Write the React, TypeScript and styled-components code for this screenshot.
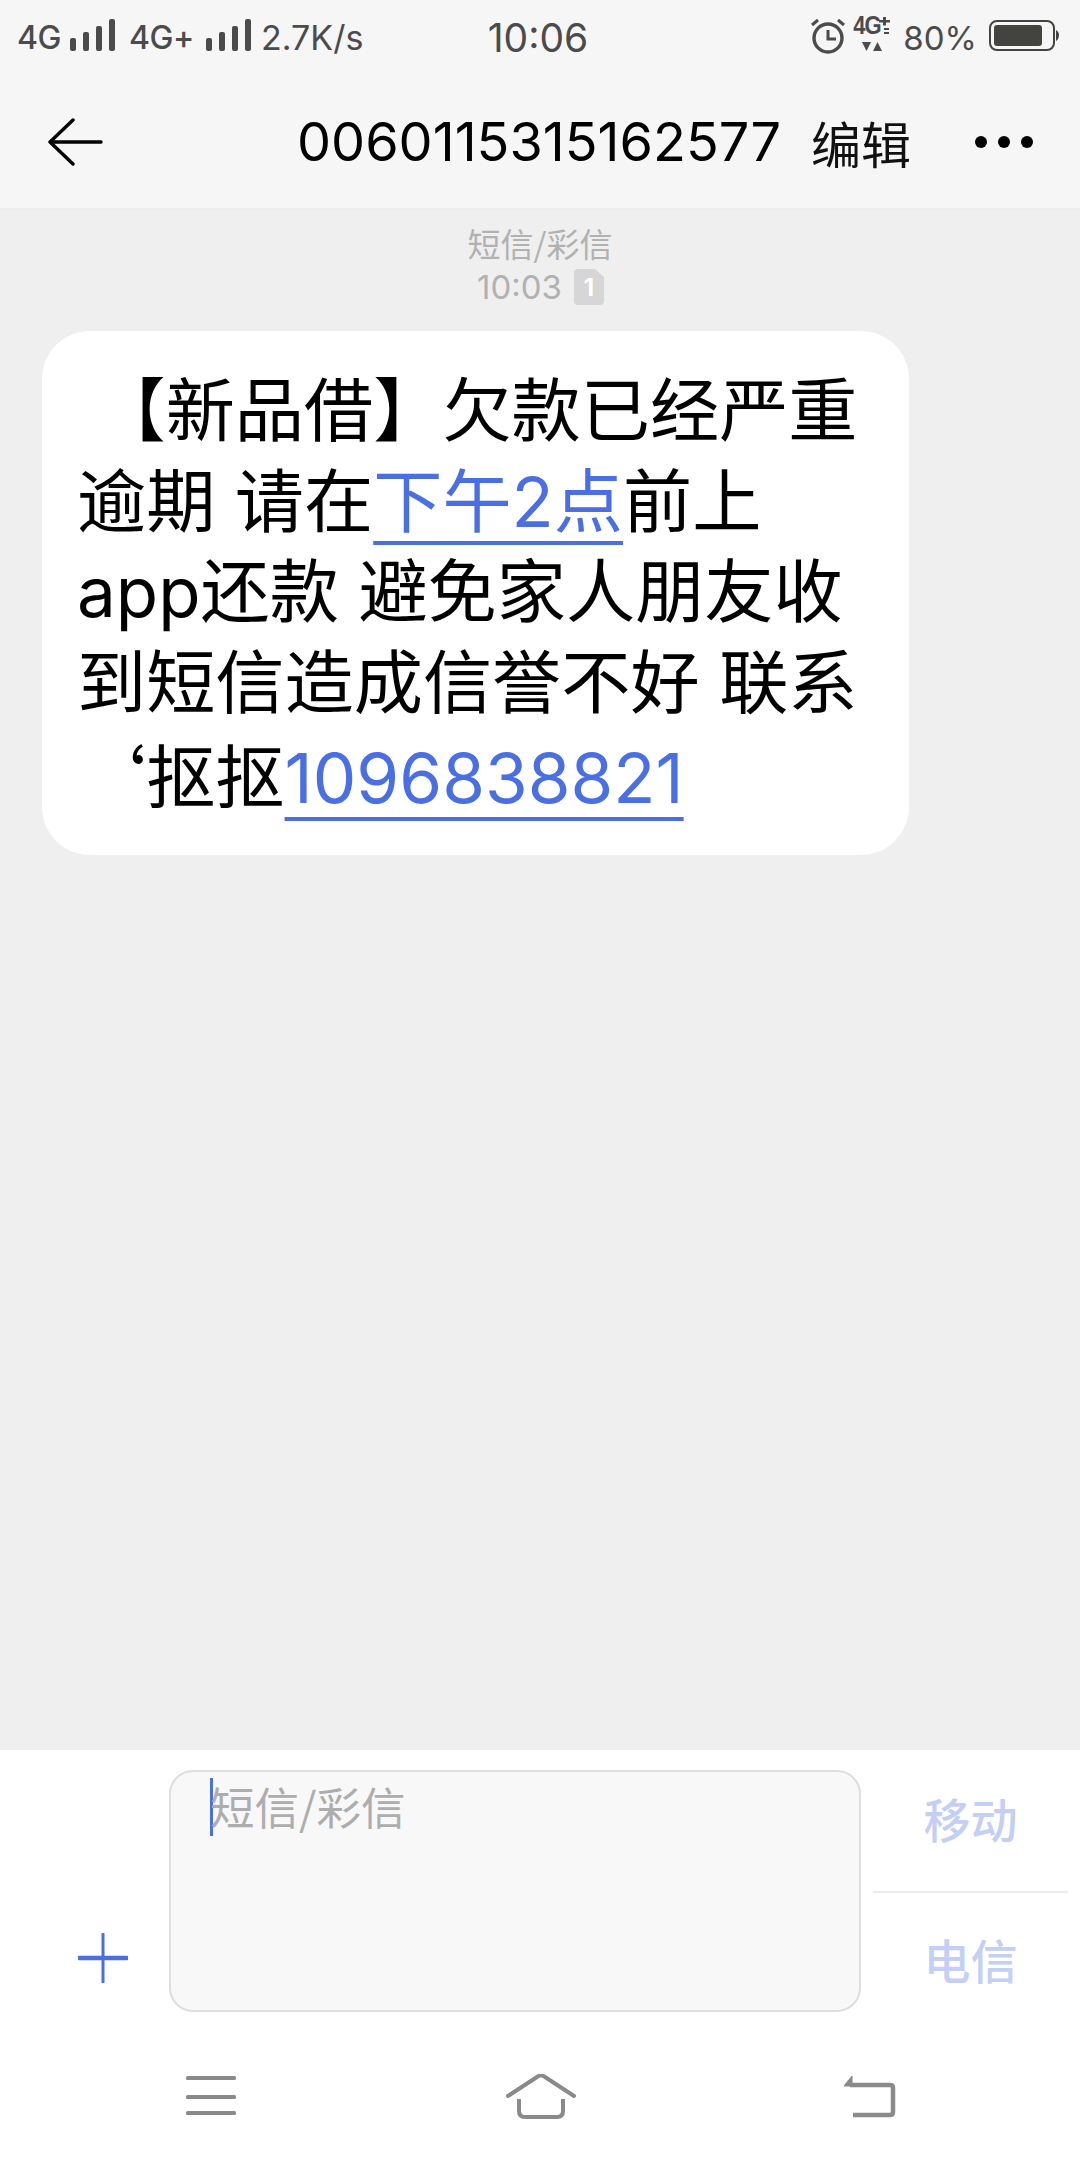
import React from "react";
import styled, { createGlobalStyle } from "styled-components";

const CJK = `"Noto Sans CJK SC", sans-serif`;
const UI = `Inter, "Noto Sans CJK SC", sans-serif`;
const BLUE = "#4a6fe3";

const Global = createGlobalStyle`
  html, body { margin: 0; padding: 0; background: #efefef; }
  * { box-sizing: border-box; }
`;

const Screen = styled.div`
  width: 1080px;
  height: 2160px;
  display: flex;
  flex-direction: column;
  overflow: hidden;
  font-family: ${UI};
`;

const Top = styled.header`
  background: #f6f6f6;
  border-bottom: 2px solid #ededed;
  height: 210px;
  flex: none;
`;

const StatusBar = styled.div`
  height: 72px;
  padding: 0 21px 0 17px;
  display: grid;
  grid-template-columns: 1fr auto 1fr;
  align-items: center;
  color: #4b4b4b;
`;

const StatusLeft = styled.div`
  display: flex;
  align-items: center;
`;

const StatusRight = styled.div`
  display: flex;
  align-items: center;
  justify-content: flex-end;
`;

const NetLabel = styled.span`
  font-size: 32px;
  font-weight: 500;
  line-height: 40px;
  letter-spacing: -0.5px;
  width: ${(p) => p.$w}px;
  margin-left: ${(p) => p.$gap || 0}px;
  white-space: nowrap;
  margin-top: 4px;
`;

const Speed = styled.span`
  font-size: 34px;
  line-height: 40px;
  margin-left: 10px;
  margin-top: 3px;
`;

const Clock = styled.span`
  font-size: 39px;
  line-height: 44px;
  margin-top: 4px;
`;

const Percent = styled.span`
  font-size: 33px;
  line-height: 40px;
  margin: 3px 12px 0 10px;
`;

const Mini = styled.div`
  width: 40px;
  margin-left: 8px;
  height: 36px;
  position: relative;
  margin-top: -4px;
`;

const MiniText = styled.span`
  font-family: "Liberation Sans", sans-serif;
  font-weight: 700;
  font-size: 22px;
  line-height: 20px;
  position: absolute;
  left: 0;
  top: 0;
  letter-spacing: -1px;
  color: #4b4b4b;
  transform: scaleY(1.2);
`;

const Nav = styled.nav`
  height: 136px;
  padding: 4px 47px 0 47px;
  display: flex;
  align-items: center;
`;

const Title = styled.h1`
  margin: 0 0 0 194px;
  font-size: 54px;
  font-weight: 400;
  color: #000;
  white-space: nowrap;
  line-height: 64px;
`;

const Edit = styled.span`
  margin-left: 30px;
  font-family: ${CJK};
  font-size: 50px;
  color: #111;
  line-height: 64px;
`;

const Dots = styled.span`
  margin-left: auto;
  display: flex;
  gap: 11px;
`;

const Dot = styled.i`
  width: 12px;
  height: 12px;
  border-radius: 50%;
  background: #000;
`;

const Feed = styled.main`
  flex: 1;
  background: #efefef;
  padding: 12px 42px 0;
`;

const Channel = styled.div`
  text-align: center;
  font-family: ${CJK};
  font-size: 33px;
  line-height: 42px;
  color: #b1b1b1;
`;

const Stamp = styled.div`
  display: flex;
  justify-content: center;
  align-items: center;
  gap: 12px;
  height: 38px;
  margin-top: 4px;
  margin-left: 1px;
  font-size: 33px;
  color: #b1b1b1;
`;

const SimBadge = styled.span`
  width: 30px;
  height: 36px;
  background: #d6d6d6;
  color: #fff;
  font-size: 24px;
  font-weight: 700;
  display: flex;
  align-items: center;
  justify-content: center;
  border-radius: 4px;
  clip-path: polygon(0 0, 70% 0, 100% 22%, 100% 100%, 0 100%);
`;

const Bubble = styled.article`
  margin-top: 25px;
  width: 867px;
  height: 524px;
  background: #fff;
  border-radius: 48px;
  padding: 35px 0 0 35px;
  color: #000;
  font-size: 69.2px;
`;

const Line = styled.div`
  height: 90.5px;
  line-height: 90.5px;
  white-space: pre;
`;

const Quote = styled.span`
  font-family: ${CJK};
`;

const Link = styled.span`
  color: ${BLUE};
  text-decoration: underline;
  text-decoration-thickness: 4px;
  text-underline-offset: 14px;
`;

const Composer = styled.section`
  flex: none;
  height: 290px;
  background: #fff;
  padding: 20px 12px 0 0;
  display: flex;
  align-items: flex-start;
`;

const PlusSlot = styled.div`
  width: 169px;
  height: 242px;
  padding: 163px 0 0 78px;
`;

const Input = styled.div`
  width: 692px;
  height: 242px;
  border: 2px solid #dedede;
  border-radius: 24px;
  background: #f8f8f8;
  padding: 6px 0 0 39px;
  display: flex;
  align-items: flex-start;
`;

const Caret = styled.i`
  width: 3px;
  height: 58px;
  background: ${BLUE};
  flex: none;
  margin-right: -3px;
`;

const Placeholder = styled.span`
  font-family: ${CJK};
  font-size: 44.5px;
  line-height: 56px;
  color: #adadad;
  white-space: nowrap;
`;

const Carriers = styled.div`
  margin-left: 12px;
  width: 195px;
  height: 242px;
  display: flex;
  flex-direction: column;
`;

const Carrier = styled.button`
  flex: none;
  height: 121px;
  border: 0;
  background: none;
  padding: ${(p) => p.$pad};
  font-family: ${CJK};
  font-size: 47px;
  font-weight: 500;
  color: #c3cff5;
  & + & {
    border-top: 2px solid #ececec;
  }
`;

const Keys = styled.footer`
  flex: none;
  height: 120px;
  background: #fff;
  display: flex;
  align-items: flex-start;
  padding: 34px 0 0 186px;
`;

const KeySlot = styled.div`
  margin-left: ${(p) => p.$gap || 0}px;
  line-height: 0;
`;

function Bars() {
  return (
    <svg width="45" height="34" viewBox="0 0 45 34" fill="#4b4b4b">
      <rect x="0" y="19" width="6" height="13" rx="2" />
      <rect x="13" y="13" width="6" height="19" rx="2" />
      <rect x="26" y="7" width="6" height="25" rx="2" />
      <rect x="39" y="0" width="6" height="32" rx="2" />
    </svg>
  );
}

function Alarm() {
  return (
    <svg width="34" height="36" viewBox="0 0 34 36" fill="none" stroke="#4b4b4b">
      <circle cx="17" cy="20" r="14" strokeWidth="3.400" />
      <path d="M17 12v9h8" strokeWidth="3" />
      <path d="M1 7l6-5M33 7l-6-5" strokeWidth="3" />
    </svg>
  );
}

function Battery() {
  return (
    <svg width="70" height="32" viewBox="0 0 70 32">
      <rect x="1" y="1" width="64" height="29" rx="7" fill="none" stroke="#43443f" strokeWidth="2" />
      <rect x="5" y="5" width="48" height="21" rx="3" fill="#43443f" />
      <path d="M67 10c2 1 3 3 3 5s-1 5-3 6z" fill="#43443f" />
    </svg>
  );
}

function MiniNet() {
  return (
    <Mini>
      <MiniText>4G</MiniText>
      <svg width="40" height="36" viewBox="0 0 40 36" fill="#4b4b4b">
        <path d="M30 1h3v3h4v2.500h-4v3h-3v-3h-4V4h4z" />
        <path d="M31 12h5v2h-5zM31 16h5v2h-5z" />
        <path d="M9 26h9l-4.500 9zM20 35l4.500-9 4.500 9z" />
      </svg>
    </Mini>
  );
}

export default function App() {
  return (
    <Screen>
      <Global />
      <Top>
        <StatusBar>
          <StatusLeft>
            <NetLabel $w={53}>4G</NetLabel>
            <Bars />
            <NetLabel $w={77} $gap={14}>4G+</NetLabel>
            <Bars />
            <Speed>2.7K/s</Speed>
          </StatusLeft>
          <Clock>10:06</Clock>
          <StatusRight>
            <Alarm />
            <MiniNet />
            <Percent>80%</Percent>
            <Battery />
          </StatusRight>
        </StatusBar>
        <Nav>
          <svg width="56" height="48" viewBox="0 0 56 48" fill="none" stroke="#000" strokeWidth="3.400" strokeLinecap="round" strokeLinejoin="round">
            <path d="M3 24h51M26 2L3 24l23 22" />
          </svg>
          <Title>0060115315162577</Title>
          <Edit>编辑</Edit>
          <Dots>
            <Dot />
            <Dot />
            <Dot />
          </Dots>
        </Nav>
      </Top>
      <Feed>
        <Channel>短信/彩信</Channel>
        <Stamp>
          10:03
          <SimBadge>1</SimBadge>
        </Stamp>
        <Bubble>
          <Line> 【新品借】欠款已经严重</Line>
          <Line>
            逾期 请在<Link>下午2点</Link>前上
          </Line>
          <Line>app还款 避免家人朋友收</Line>
          <Line>到短信造成信誉不好 联系</Line>
          <Line>
            <Quote>‘</Quote>抠抠<Link>1096838821</Link>
          </Line>
        </Bubble>
      </Feed>
      <Composer>
        <PlusSlot>
          <svg width="50" height="50" viewBox="0 0 50 50" stroke={BLUE} strokeLinecap="round">
            <path d="M1 25h48" strokeWidth="4.500" />
            <path d="M25 1v48" strokeWidth="3" />
          </svg>
        </PlusSlot>
        <Input>
          <Caret />
          <Placeholder>短信/彩信</Placeholder>
        </Input>
        <Carriers>
          <Carrier $pad="0 0 27px">移动</Carrier>
          <Carrier $pad="11px 0 0">电信</Carrier>
        </Carriers>
      </Composer>
      <Keys>
        <KeySlot>
          <svg width="50" height="44" viewBox="0 0 50 44" fill="#8a8a8a">
            <rect y="2" width="50" height="4" rx="1.500" />
            <rect y="21" width="50" height="4" rx="1.500" />
            <rect y="37" width="50" height="4" rx="1.500" />
          </svg>
        </KeySlot>
        <KeySlot $gap={270}>
          <svg width="70" height="46" viewBox="0 0 70 46" fill="none" stroke="#8a8a8a" strokeWidth="4" strokeLinejoin="round">
            <path d="M2 22L31 3q4-3 8 0l29 19" strokeLinecap="round" />
            <path d="M13 25v12q0 6 6 6h32q6 0 6-6V25" />
          </svg>
        </KeySlot>
        <KeySlot $gap={268}>
          <svg width="52" height="44" viewBox="0 0 52 44" fill="none" stroke="#8a8a8a" strokeWidth="4.500">
            <path d="M6 11h40q3 0 3 3v24q0 3-3 3H9" />
            <path d="M0 12L8 2v10z" fill="#8a8a8a" strokeWidth="1" />
          </svg>
        </KeySlot>
      </Keys>
    </Screen>
  );
}
